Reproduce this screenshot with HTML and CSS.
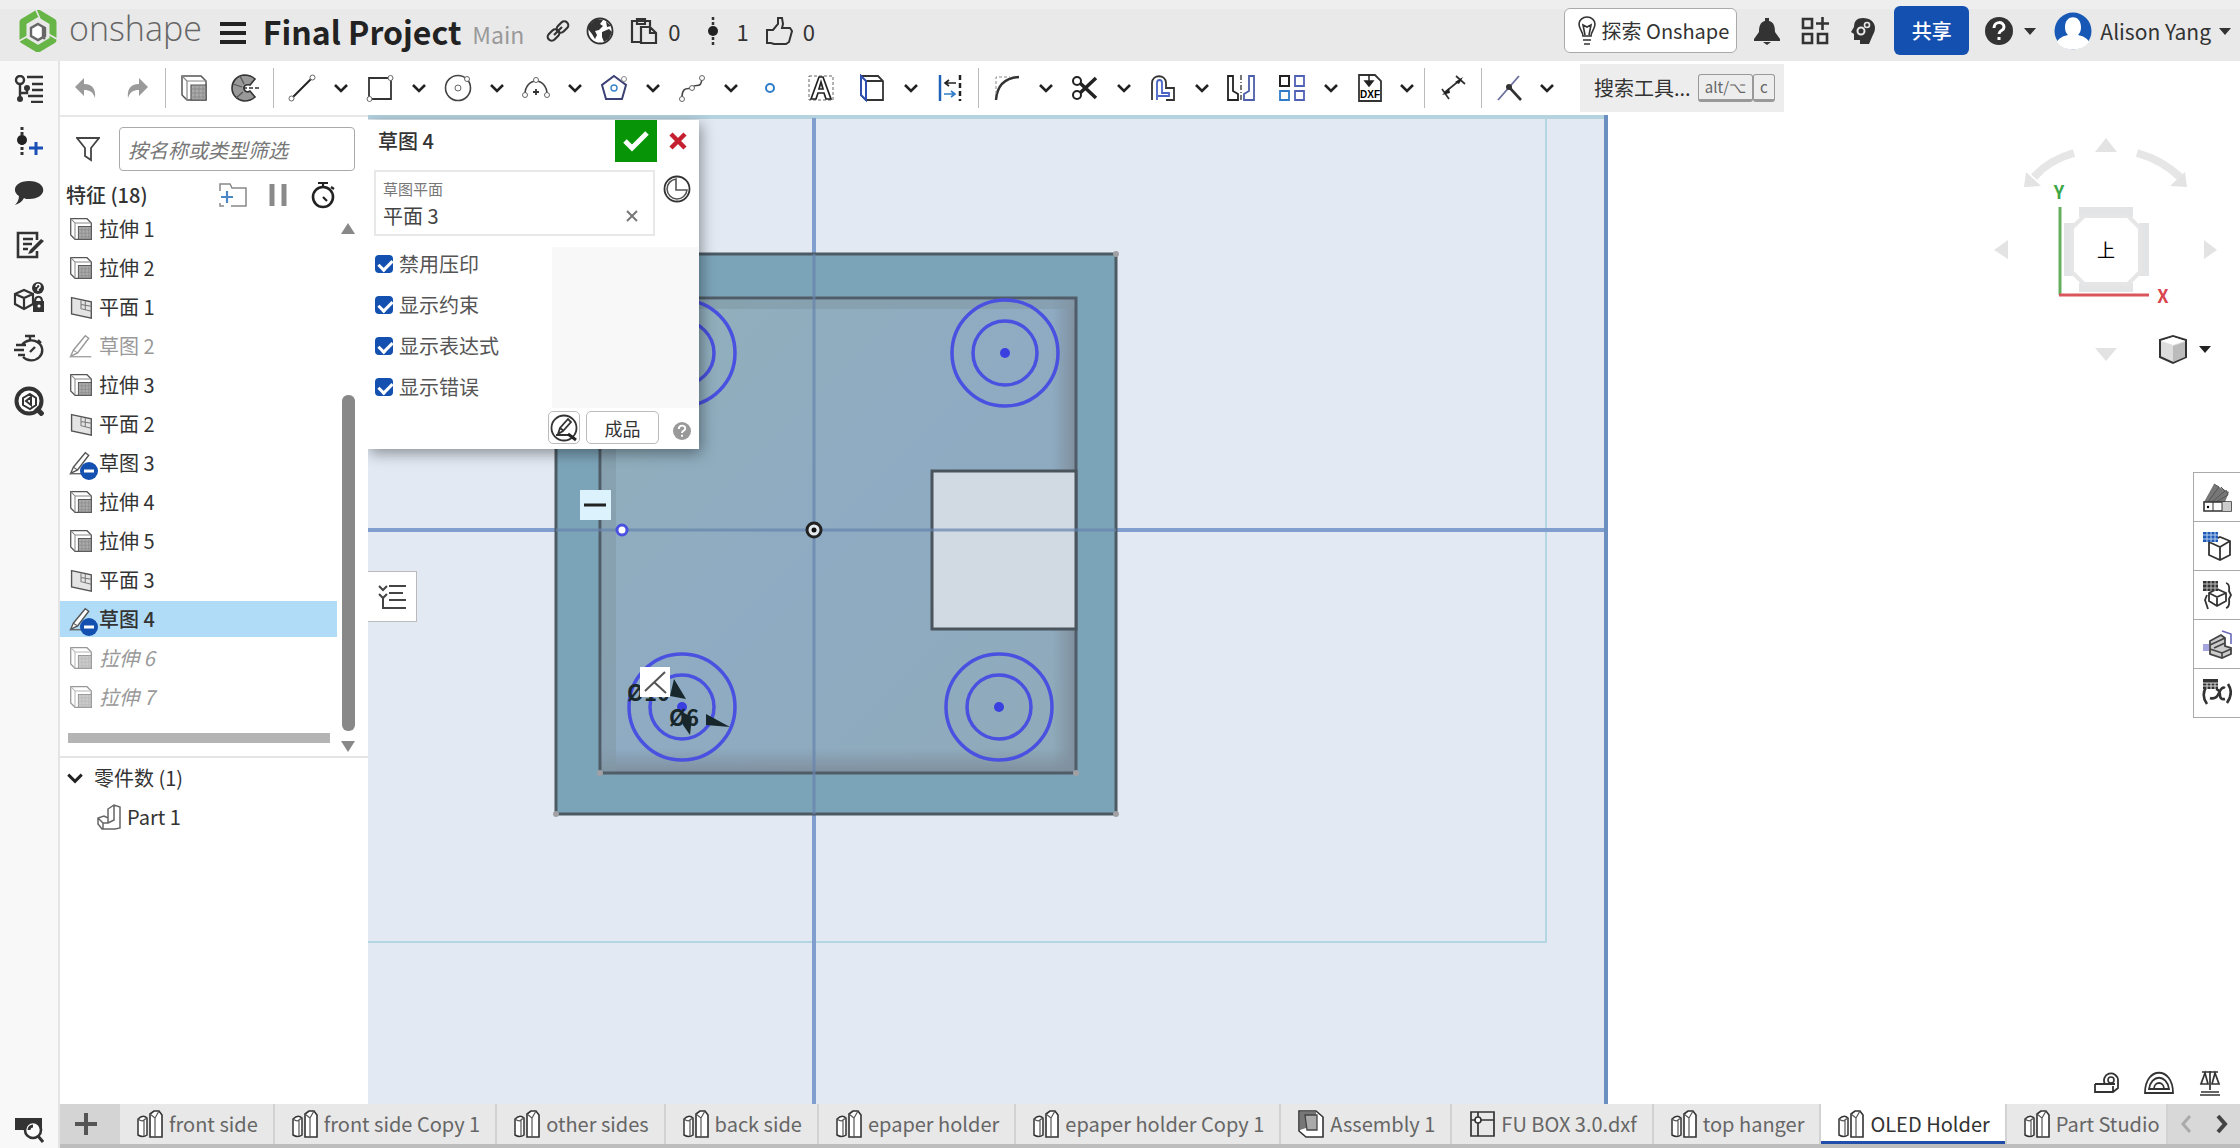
FILE: index.html
```
<!DOCTYPE html>
<html lang="zh-CN">
<head>
    <meta charset="UTF-8">
    <meta name="viewport" content="width=device-width, initial-scale=1.0">
    <title>Final Project | OLED Holder</title>
    <link rel="stylesheet" href="styles.css">
</head>
<body>
    <!-- Shared icons -->
    <svg class="sprite" aria-hidden="true">
        <symbol id="chevron" viewBox="0 0 16 10"><path d="M2 2l6 6 6-6" fill="none" stroke="#222" stroke-width="2.6"/></symbol>
        <symbol id="caret" viewBox="0 0 12 8"><path d="M0 1h12L6 8z" fill="#333"/></symbol>
        <symbol id="extrude" viewBox="0 0 28 28">
            <path d="M2 2h19l5 5v19H7l-5-5z" fill="#fff" stroke="#555" stroke-width="1.5"/>
            <path d="M2 2l5 5v19M7 7h19" fill="none" stroke="#888" stroke-width="1.2"/>
            <path d="M11 11h15v15H11z" fill="#aaa" stroke="#555" stroke-width="1.2"/>
            <path d="M11 15h15M11 19h15M11 23h15M15 11v15M19 11v15M23 11v15" stroke="#888" stroke-width=".8"/>
        </symbol>
        <symbol id="plane" viewBox="0 0 28 28">
            <path d="M3 3l23 5v19L3 22z" fill="#e4e4e4" stroke="#555" stroke-width="1.6"/>
            <path d="M14 6v10l12 3M19 7v10M14 11l12 2" fill="none" stroke="#777" stroke-width="1.2"/>
        </symbol>
        <symbol id="sketch" viewBox="0 0 28 28">
            <path d="M5 19L19 2l4 3L10 22l-8 4z" fill="#fff" stroke="#555" stroke-width="1.6"/>
            <path d="M1 26.500h25" stroke="#666" stroke-width="1.6"/>
            <path d="M5 19l5 3" stroke="#555" stroke-width="1.2"/>
        </symbol>
        <symbol id="badge-minus" viewBox="0 0 18 18"><circle cx="9" cy="9" r="9" fill="#1450b0"/><path d="M4 9h10" stroke="#fff" stroke-width="3"/></symbol>
        <symbol id="partstudio" viewBox="0 0 26 28">
            <path d="M1 9q5-5 9-1v17q-4 3-9 0z" fill="#fff" stroke="#333" stroke-width="1.500"/>
            <path d="M1 9q4 3 6 1v16M7 10l3-2" fill="none" stroke="#555" stroke-width="1.200"/>
            <path d="M13 4l4-3h5l3 4v22H13z" fill="#fff" stroke="#333" stroke-width="1.600"/>
            <path d="M13 4l5 4v19M18 8l4-7" fill="none" stroke="#555" stroke-width="1.200"/>
        </symbol>
        <symbol id="assembly" viewBox="0 0 26 28">
            <path d="M1 1h17l7 6v20H8l-7-6z" fill="#fff" stroke="#333" stroke-width="1.6"/>
            <path d="M2 2h16v16H8l-6 2z" fill="#777"/><path d="M7 5h12v15H9z" fill="#aaa" stroke="#444" stroke-width="1.3"/>
        </symbol>
        <symbol id="drawing" viewBox="0 0 26 28">
            <path d="M2 2h23v24H2zM2 10h23M9 2v5M9 13v13" fill="none" stroke="#333" stroke-width="1.7"/><circle cx="9" cy="10" r="3" fill="#fff" stroke="#333" stroke-width="1.6"/>
        </symbol>
        <symbol id="timer" viewBox="0 0 28 28">
            <circle cx="14" cy="16" r="10" fill="none" stroke="#222" stroke-width="2.6"/><path d="M9 2h10M14 2v4M22 6l3 2M14 16l4 4" stroke="#222" stroke-width="2.2"/>
        </symbol>
    </svg>

    <header class="topbar">
        <a class="logo" href="#" aria-label="onshape">
            <svg width="38" height="42" viewBox="0 0 38 42">
                <path d="M19 3l15 9v18l-15 9-15-9V12z" fill="none" stroke="#68b547" stroke-width="7" stroke-linejoin="round"/>
                <path d="M17 0l4 9M0 31l9-5M38 29l-9-5" stroke="#e9e9e9" stroke-width="1.600"/>
                <path d="M19 14l7 4v8l-7 4-7-4v-8z" fill="#fff" stroke="#666" stroke-width="2.400"/>
                <path d="M24 17v10l2 2" fill="none" stroke="#666" stroke-width="2.400"/>
            </svg>
            <span>onshape</span>
        </a>
        <button class="menu" aria-label="菜单"><svg width="26" height="24"><path d="M0 3h26M0 12h26M0 21h26" stroke="#222" stroke-width="4"/></svg></button>
        <h1>Final Project</h1>
        <span class="branch">Main</span>
        <div class="doc-actions">
            <button aria-label="链接"><svg width="24" height="28" viewBox="0 0 24 28"><g fill="none" stroke="#333" stroke-width="2.200"><rect x="1" y="14" width="13" height="8" rx="4" transform="rotate(-45 7.500 18)"/><rect x="10" y="6" width="13" height="8" rx="4" transform="rotate(-45 16.500 10)"/><path d="M8 18l8-8"/></g></svg></button>
            <button aria-label="公开"><svg width="28" height="28" viewBox="0 0 28 28"><circle cx="14" cy="14" r="12.500" fill="#fff" stroke="#333" stroke-width="1.800"/><path d="M3 8l7-6 7 1-3 4 3 2-4 4-4 1 2 4-2 4-3-5-4-5zM16 15l7-3 3 3-3 7-5 3-2-5zM20 4l5 5-4 1z" fill="#333"/></svg></button>
            <button aria-label="副本"><svg width="28" height="28" viewBox="0 0 28 28"><path d="M10 25H2V4h18v5M7 2h8v5H7zM11 10h9l6 6v10H11zM20 10v6h6" fill="none" stroke="#333" stroke-width="2.200"/></svg><span>0</span></button>
            <button class="versions" aria-label="版本"><svg width="12" height="28" viewBox="0 0 12 28"><path d="M6 0v28" stroke="#333" stroke-width="2.500" stroke-dasharray="3 2"/><circle cx="6" cy="14" r="5" fill="#222"/></svg><span>1</span></button>
            <button class="likes" aria-label="赞"><svg width="28" height="28" viewBox="0 0 28 28"><path d="M2 13h6l5-6V1h4l1 6-1 4h8l2 3-3 11-3 2H9l-3-1H2z" fill="none" stroke="#333" stroke-width="2"/></svg><span>0</span></button>
        </div>
        <div class="account">
            <button class="explore"><svg width="18" height="30" viewBox="0 0 18 30"><path d="M5 20C5 16 1 13 1 8a8 7 0 0 1 16 0c0 5-4 8-4 12zM5 24h8M6 28h6M7 19L5 9l4 2 4-2-2 10" fill="none" stroke="#333" stroke-width="1.600"/></svg><span>探索 Onshape</span></button>
            <button aria-label="通知"><svg width="28" height="28" viewBox="0 0 28 28"><path d="M12 1h4v3c5 1 6 6 6 11l5 7v2H1v-2l5-7c0-5 1-10 6-11zM10 25h8l-4 3z" fill="#333"/></svg></button>
            <button aria-label="应用"><svg width="28" height="28" viewBox="0 0 28 28"><path d="M2 2h9v9H2zM2 17h9v9H2zM17 17h9v9h-9zM21.500 0v13M15 6.500h13" fill="none" stroke="#333" stroke-width="2.600"/></svg></button>
            <button aria-label="AI"><svg width="28" height="28" viewBox="0 0 28 28"><path d="M14 1c7 0 12 4 12 10 0 4-2 6-3 9l-3 7h-9v-4H5v-6l-3-2 3-5C5 4 8 1 14 1z" fill="#333"/><circle cx="12" cy="14" r="3.500" fill="none" stroke="#e9e9e9" stroke-width="2"/><circle cx="18" cy="8" r="2.500" fill="none" stroke="#e9e9e9" stroke-width="1.600"/></svg></button>
            <button class="share">共享</button>
            <button class="help" aria-label="帮助"><svg width="28" height="28" viewBox="0 0 28 28"><circle cx="14" cy="14" r="14" fill="#333"/><path d="M9 11c0-7 10-7 10-1 0 4-5 3-5 7M14 20v3" fill="none" stroke="#fff" stroke-width="3"/></svg><svg width="12" height="8"><use href="#caret"/></svg></button>
            <button class="user"><svg width="38" height="38" viewBox="0 0 38 38"><circle cx="19" cy="19" r="18.500" fill="#1757b5"/><path d="M11 15c0-13 16-13 16 0 0 5-2 7-3 8 5 1 9 3 11 7-7 10-25 10-32 0 2-4 6-6 11-7-1-1-3-3-3-8z" fill="#fff"/></svg><span>Alison Yang</span><svg width="12" height="8"><use href="#caret"/></svg></button>
        </div>
    </header>

    <div class="app">
        <nav class="rail">
            <button aria-label="特征列表"><svg width="30" height="28" viewBox="0 0 30 28"><g fill="none" stroke="#333" stroke-width="2.400"><circle cx="6" cy="5" r="4"/><path d="M6 9v15M6 18h7v-5M13 2h16M18 9h11M18 15h11M14 21h15M17 27h12"/></g><circle cx="6" cy="24" r="3" fill="#333"/><circle cx="13" cy="13" r="3" fill="#333"/></svg></button>
            <button aria-label="新建版本"><svg width="30" height="30" viewBox="0 0 30 30"><path d="M8 1v28" stroke="#333" stroke-width="3" stroke-dasharray="3 2"/><circle cx="8" cy="14" r="5" fill="#222"/><path d="M22 16v13M15 22h14" stroke="#1a4fb5" stroke-width="3"/></svg></button>
            <button aria-label="评论"><svg width="30" height="28" viewBox="0 0 30 28"><path d="M15 2c19 0 19 18 0 18-2 0-4 0-5-1-2 4-6 6-9 7 2-2 4-5 4-9C-3 12 1 2 15 2z" fill="#333"/></svg></button>
            <button aria-label="备注"><svg width="30" height="30" viewBox="0 0 30 30"><path d="M23 10V3H4v24h19v-6M9 9h10M9 14h9M9 19h5" fill="none" stroke="#333" stroke-width="2.600"/><path d="M27 9l3 2-12 12-4 1 2-4z" fill="#333"/></svg></button>
            <button aria-label="属性"><svg width="32" height="32" viewBox="0 0 32 32"><path d="M2 13l9-4 9 4v10l-9 5-9-5zM2 13l9 4 9-4M11 17v11" fill="none" stroke="#333" stroke-width="2.200"/><circle cx="25" cy="7" r="6" fill="#333"/><path d="M23 6c0-4 5-3 4 0l-2 2v2" fill="none" stroke="#fff" stroke-width="1.500"/><path d="M20 20h11v11H20z" fill="#333"/><path d="M22 21c0-7 7-7 7 0" fill="none" stroke="#333" stroke-width="2.200"/><circle cx="26" cy="25" r="1.600" fill="#fff"/></svg></button>
            <button aria-label="性能"><svg width="30" height="30" viewBox="0 0 30 30"><path d="M8 11a11 10 0 1 1 1 12M11 2h10M16 2v5M24 6l3 3M16 18l5-5M2 11h10M0 16h10M4 21h7" fill="none" stroke="#333" stroke-width="2.400"/></svg></button>
            <button aria-label="查找零件"><svg width="30" height="30" viewBox="0 0 30 30"><circle cx="15" cy="15" r="12.500" fill="#fff" stroke="#333" stroke-width="4"/><path d="M22 22l7 7" stroke="#333" stroke-width="5"/><path d="M16 8l6 4v7l-6 4-7-4v-7zM17 11l-5 4 5 4z" fill="none" stroke="#333" stroke-width="2"/></svg></button>
            <button class="rail-end" aria-label="搜索"><svg width="30" height="26" viewBox="0 0 30 26"><path d="M1 1h27v12H1z" fill="#333"/><circle cx="19" cy="13" r="8" fill="#fff" stroke="#333" stroke-width="2.600"/><path d="M15 13a4 4 0 0 1 4-4M24 19l5 6" fill="none" stroke="#333" stroke-width="3"/></svg></button>
        </nav>

        <div class="workspace">
            <div class="toolbar">
                <button class="tool" aria-label="撤销"><svg viewBox="0 0 28 28"><path d="M12 4v6c9 0 12 6 11 14-2-6-5-8-11-8v6L3 13z" fill="#9a9a9a"/></svg></button>
                <button class="tool spaced" aria-label="重做"><svg viewBox="0 0 28 28"><path d="M16 4v6C7 10 4 16 5 24c2-6 5-8 11-8v6l9-9z" fill="#9a9a9a"/></svg></button>
                <span class="divider"></span>
                <button class="tool" aria-label="拉伸"><svg><use href="#extrude"/></svg></button>
                <button class="tool spaced" aria-label="旋转"><svg viewBox="0 0 28 28"><path d="M24 5C21 2 17 1 13 1 5 2 1 8 1 14c0 7 5 12 12 13 4 0 8-1 11-4l-5-6c-6 4-10-8 0-6z" fill="#999" stroke="#333" stroke-width="1.600"/><path d="M12 14h16" stroke="#333" stroke-width="1.500" stroke-dasharray="4 2"/><path d="M9 2l4 8M2 10l9 3M5 24l7-6" stroke="#555" stroke-width="1.300"/></svg></button>
                <span class="divider"></span>
                <button class="tool" aria-label="直线"><svg viewBox="0 0 28 28"><path d="M4 24L24 4" stroke="#222" stroke-width="2"/><circle cx="3.500" cy="24.500" r="2.500" fill="#fff" stroke="#666"/><circle cx="24.500" cy="3.500" r="2.500" fill="#fff" stroke="#666"/></svg></button>
                <button class="more" aria-label="更多直线"><svg><use href="#chevron"/></svg></button>
                <button class="tool" aria-label="矩形"><svg viewBox="0 0 28 28"><path d="M3 4h22v21H3z" fill="none" stroke="#333" stroke-width="1.800"/><circle cx="3.500" cy="25" r="2.500" fill="#fff" stroke="#666"/><circle cx="24.500" cy="4" r="2.500" fill="#fff" stroke="#666"/></svg></button>
                <button class="more" aria-label="更多矩形"><svg><use href="#chevron"/></svg></button>
                <button class="tool" aria-label="圆"><svg viewBox="0 0 28 28"><circle cx="14" cy="14" r="12.500" fill="none" stroke="#444" stroke-width="1.600"/><circle cx="14" cy="14" r="3" fill="none" stroke="#666"/><circle cx="23" cy="5" r="2.500" fill="#fff" stroke="#666"/></svg></button>
                <button class="more" aria-label="更多圆"><svg><use href="#chevron"/></svg></button>
                <button class="tool" aria-label="圆弧"><svg viewBox="0 0 28 28"><path d="M3 20a11 13 0 0 1 22 0" fill="none" stroke="#444" stroke-width="1.600"/><path d="M14 15v6M11 18h6" stroke="#333" stroke-width="1.800"/><g fill="#fff" stroke="#666"><circle cx="3" cy="21" r="2.500"/><circle cx="25" cy="21" r="2.500"/><circle cx="14" cy="6" r="2.500"/></g></svg></button>
                <button class="more" aria-label="更多圆弧"><svg><use href="#chevron"/></svg></button>
                <button class="tool" aria-label="多边形"><svg viewBox="0 0 28 28"><path d="M14 2l12 9-4 14H6L2 11z" fill="none" stroke="#3b4075" stroke-width="2"/><circle cx="14" cy="14" r="3" fill="#fff" stroke="#3a85cc" stroke-width="1.400"/><circle cx="24" cy="5" r="2.500" fill="#fff" stroke="#888"/></svg></button>
                <button class="more" aria-label="更多多边形"><svg><use href="#chevron"/></svg></button>
                <button class="tool" aria-label="样条"><svg viewBox="0 0 28 28"><path d="M4 24c0-14 8-7 11-11s8 3 9-9" fill="none" stroke="#444" stroke-width="1.600"/><g fill="#fff" stroke="#666"><circle cx="4" cy="25" r="2.500"/><circle cx="14" cy="14" r="2.500"/><circle cx="24" cy="4" r="2.500"/></g></svg></button>
                <button class="more" aria-label="更多样条"><svg><use href="#chevron"/></svg></button>
                <button class="tool" aria-label="点"><svg viewBox="0 0 28 28"><circle cx="14" cy="14" r="4" fill="#fff" stroke="#2f7cc8" stroke-width="2"/></svg></button>
                <button class="tool spaced" aria-label="文本"><svg viewBox="0 0 28 28"><path d="M2 2h24v24H2z" fill="none" stroke="#666" stroke-dasharray="3 2"/><path d="M4 25L12 3h4l8 22h-5l-2-6h-6l-2 6zM12 15h4l-2-7z" fill="#fff" stroke="#222" stroke-width="1.700"/></svg></button>
                <button class="tool spaced" aria-label="使用"><svg viewBox="0 0 28 28"><path d="M3 2h17l5 5v19H8l-5-5zM8 7h17" fill="none" stroke="#333" stroke-width="1.800"/><path d="M3 2l5 5v19l-5-5z" fill="#fff" stroke="#2f4fb0" stroke-width="2"/></svg></button>
                <button class="more" aria-label="更多使用"><svg><use href="#chevron"/></svg></button>
                <button class="tool" aria-label="构造"><svg viewBox="0 0 28 28"><path d="M4 1v26" stroke="#1f63b8" stroke-width="2.500"/><path d="M24 1v26" stroke="#222" stroke-width="2.500" stroke-dasharray="5 3"/><path d="M20 9h-10M13 6l-4 3 4 3" fill="none" stroke="#222" stroke-width="1.600"/><path d="M8 20h10M15 17l4 3-4 3" fill="none" stroke="#2f7cc8" stroke-width="1.600"/></svg></button>
                <span class="divider"></span>
                <button class="tool" aria-label="圆角"><svg viewBox="0 0 28 28"><path d="M3 26C4 12 11 4 26 3" fill="none" stroke="#333" stroke-width="2.400"/><path d="M3 20V3h14" fill="none" stroke="#888" stroke-dasharray="3 2"/></svg></button>
                <button class="more" aria-label="更多圆角"><svg><use href="#chevron"/></svg></button>
                <button class="tool" aria-label="修剪"><svg viewBox="0 0 28 28"><path d="M9 9l16 15M9 19L25 4" stroke="#222" stroke-width="3.500"/><circle cx="6" cy="7" r="4" fill="none" stroke="#222" stroke-width="2"/><circle cx="6" cy="21" r="4" fill="none" stroke="#222" stroke-width="2"/></svg></button>
                <button class="more" aria-label="更多修剪"><svg><use href="#chevron"/></svg></button>
                <button class="tool" aria-label="偏移"><svg viewBox="0 0 28 28"><path d="M3 26V9C3 0 17 0 17 9v5h8v12h-8" fill="none" stroke="#333" stroke-width="1.800"/><path d="M8 26V9c0-4 5-4 5 0v10h7v3H9" fill="none" stroke="#4963c4" stroke-width="1.800"/></svg></button>
                <button class="more" aria-label="更多偏移"><svg><use href="#chevron"/></svg></button>
                <button class="tool" aria-label="镜像"><svg viewBox="0 0 28 28"><path d="M1 2h5v15l5 3v6H1z" fill="none" stroke="#222" stroke-width="1.800"/><path d="M14 1v26" stroke="#555" stroke-width="1.600" stroke-dasharray="5 2 1 2"/><path d="M27 2h-5v15l-5 3v6h10z" fill="none" stroke="#4d5fa8" stroke-width="1.800"/></svg></button>
                <button class="tool spaced" aria-label="阵列"><svg viewBox="0 0 28 28"><path d="M2 2h9v10H2z" fill="none" stroke="#222" stroke-width="2"/><path d="M17 2h9v10h-9zM17 17h9v9h-9z" fill="none" stroke="#5060b5" stroke-width="1.800"/><path d="M2 17h9v9H2z" fill="none" stroke="#2f7cc8" stroke-width="1.800"/></svg></button>
                <button class="more" aria-label="更多阵列"><svg><use href="#chevron"/></svg></button>
                <button class="tool" aria-label="插入 DXF"><svg viewBox="0 0 28 28"><path d="M3 1h16l6 6v20H3z" fill="none" stroke="#333" stroke-width="1.800"/><path d="M13 1v8M9 7l4 5 4-5z" fill="#222" stroke="#222" stroke-width="1.500"/><text x="14" y="24" class="dxf">DXF</text></svg></button>
                <button class="more narrow" aria-label="更多插入"><svg><use href="#chevron"/></svg></button>
                <span class="divider tight"></span>
                <button class="tool" aria-label="尺寸"><svg viewBox="0 0 28 28"><path d="M5 19L21 6M17 2l9 8M3 15l7 10" fill="none" stroke="#333" stroke-width="1.700"/><path d="M3 21l7-7 1 5zM24 3l-8 5 4 2z" fill="#222"/></svg></button>
                <span class="divider"></span>
                <button class="tool" aria-label="约束"><svg viewBox="0 0 28 28"><path d="M13 13l12 13" stroke="#333" stroke-width="2.600"/><path d="M2 26L23 2" stroke="#6a6f9c" stroke-width="1.800"/><circle cx="13" cy="13" r="3" fill="#333"/></svg></button>
                <button class="more narrow" aria-label="更多约束"><svg><use href="#chevron"/></svg></button>
                <button class="tool-search">搜索工具... <kbd>alt/⌥</kbd><kbd>c</kbd></button>
            </div>

            <div class="stage">
                <aside class="panel">
                    <div class="filter">
                        <svg width="24" height="26" viewBox="0 0 24 26"><path d="M1 2h22l-8 10v12l-6-4v-8z" fill="none" stroke="#444" stroke-width="1.800"/></svg>
                        <input type="text" placeholder="按名称或类型筛选" aria-label="按名称或类型筛选">
                    </div>
                    <div class="panel-head">
                        <h2>特征 (18)</h2>
                        <button aria-label="新建文件夹"><svg width="28" height="24" viewBox="0 0 28 24"><path d="M1 8V1h10l2 4h14v18H12M1 20v3h4" fill="none" stroke="#888" stroke-width="1.500"/><path d="M8 8v12M2 14h12" stroke="#4b86c6" stroke-width="2.200"/></svg></button>
                        <button aria-label="暂停"><svg width="20" height="22"><path d="M4 0v22M16 0v22" stroke="#8a8a8a" stroke-width="5"/></svg></button>
                        <button aria-label="重建时间"><svg width="28" height="28"><use href="#timer"/></svg></button>
                    </div>
                    <div class="features">
                        <ul>
                            <li><svg><use href="#extrude"/></svg>拉伸 1</li>
                            <li><svg><use href="#extrude"/></svg>拉伸 2</li>
                            <li><svg><use href="#plane"/></svg>平面 1</li>
                            <li class="hidden-item"><svg><use href="#sketch"/></svg>草图 2</li>
                            <li><svg><use href="#extrude"/></svg>拉伸 3</li>
                            <li><svg><use href="#plane"/></svg>平面 2</li>
                            <li><svg><use href="#sketch"/></svg><svg class="badge"><use href="#badge-minus"/></svg>草图 3</li>
                            <li><svg><use href="#extrude"/></svg>拉伸 4</li>
                            <li><svg><use href="#extrude"/></svg>拉伸 5</li>
                            <li><svg><use href="#plane"/></svg>平面 3</li>
                            <li class="selected"><svg><use href="#sketch"/></svg><svg class="badge"><use href="#badge-minus"/></svg>草图 4</li>
                            <li class="hidden-item rolled"><svg><use href="#extrude"/></svg>拉伸 6</li>
                            <li class="hidden-item rolled"><svg><use href="#extrude"/></svg>拉伸 7</li>
                        </ul>
                        <div class="scrollbar"><span class="arrow-up"></span><span class="thumb"></span><span class="arrow-down"></span></div>
                        <div class="rollback"></div>
                    </div>
                    <div class="parts">
                        <h2><svg width="18" height="12"><use href="#chevron"/></svg>零件数 (1)</h2>
                        <div class="part"><svg width="24" height="26" viewBox="0 0 24 26"><path d="M11 5l6-4 6 2v21l-5 1H5l-4-5v-6l6-2 4 2zM11 14v5H6M1 14l5 5v6M17 1v15l-6 3" fill="#fff" stroke="#666" stroke-width="1.500"/></svg>Part 1</div>
                    </div>
                </aside>

                <main class="canvas">
                    <svg class="model" viewBox="368 115 1872 989" preserveAspectRatio="xMinYMin slice">
                        <defs>
                            <linearGradient id="face" x1="0" y1="0" x2="1" y2="1"><stop offset="0" stop-color="#91afb9"/><stop offset=".5" stop-color="#8eabc3"/><stop offset="1" stop-color="#8faab9"/></linearGradient>
                            <linearGradient id="shade-b" x1="0" y1="0" x2="0" y2="1"><stop offset="0" stop-color="#7f8f9e" stop-opacity="0"/><stop offset="1" stop-color="#7f8f9e"/></linearGradient>
                            <linearGradient id="shade-r"><stop offset="0" stop-color="#7f8f9e" stop-opacity="0"/><stop offset="1" stop-color="#7f8f9e"/></linearGradient>
                        </defs>
                        <!-- sketch plane and guides -->
                        <path d="M368 115h1238v989H368z" fill="#e2e9f3"/>
                        <path d="M368 117h1238" stroke="#b4d3df" stroke-width="4"/>
                        <path d="M1546 118v824H368" fill="none" stroke="#b3d6e2" stroke-width="2"/>
                        <path d="M368 530h1238M814 118v986" stroke="#809fce" stroke-width="4"/>
                        <path d="M1606 115v989" stroke="#6b90c0" stroke-width="4"/>
                        <!-- body -->
                        <path d="M556 254h560v560H556z" fill="#7ca4b8" stroke="#4c5a64" stroke-width="3"/>
                        <path d="M600 298h476v475H600z" fill="url(#face)"/>
                        <path d="M600 748h476v25H600z" fill="url(#shade-b)"/>
                        <path d="M1052 298h24v475h-24z" fill="url(#shade-r)"/>
                        <path d="M602 298h14v475h-14zM600 300h476v9H600z" fill="#829aa6" opacity=".6"/>
                        <path d="M600 298h476v475H600z" fill="none" stroke="#505d68" stroke-width="3"/>
                        <path d="M932 471h144v158H932z" fill="#d1d9e3" stroke="#4a545c" stroke-width="3"/>
                        <path d="M556 530h560M814 254v560" stroke="#6684ad" stroke-width="3" opacity=".7"/>
                        <g fill="#a1a1a5"><circle cx="556" cy="814" r="3"/><circle cx="1116" cy="814" r="3"/><circle cx="1116" cy="254" r="3"/><circle cx="600" cy="773" r="3"/><circle cx="1076" cy="773" r="3"/></g>
                        <!-- holes -->
                        <g fill="none" stroke="#4a50e0" stroke-width="3.500">
                            <circle cx="682" cy="353" r="53"/><circle cx="682" cy="353" r="32"/>
                            <circle cx="1005" cy="353" r="53"/><circle cx="1005" cy="353" r="32"/>
                            <circle cx="682" cy="707" r="53"/><circle cx="682" cy="707" r="32"/>
                            <circle cx="999" cy="707" r="53"/><circle cx="999" cy="707" r="32"/>
                        </g>
                        <g fill="#3a3fe0"><circle cx="1005" cy="353" r="5"/><circle cx="999" cy="707" r="5"/><circle cx="682" cy="707" r="5"/></g>
                        <!-- dimensions and constraints -->
                        <g fill="#17272b">
                            <text x="627" y="701" class="dim">Ø10</text>
                            <text x="669" y="726" class="dim">Ø6</text>
                            <path d="M674 679l12 20-16-3zM706 714l24 13-24-2zM682 712l10 5-2 18-7-10z"/>
                        </g>
                        <circle cx="622" cy="530" r="5" fill="#fff" stroke="#4a50e0" stroke-width="3"/>
                        <circle cx="814" cy="530" r="7" fill="#e5eaee" stroke="#222" stroke-width="3"/><circle cx="814" cy="530" r="2.500" fill="#111"/>
                        <path d="M580 490h31v30h-31z" fill="#dcf2fc"/><path d="M584 505h22" stroke="#222" stroke-width="3"/>
                        <path d="M640 667h30v30h-30z" fill="#fff"/><path d="M645 691l20-19M654 682l12 11" stroke="#555" stroke-width="2"/>
                    </svg>

                    <section class="dialog">
                        <div class="dialog-head">
                            <h3>草图 4</h3>
                            <button class="accept" aria-label="确定"><svg width="26" height="22" viewBox="0 0 26 22"><path d="M2 11l7 7L24 3" fill="none" stroke="#fff" stroke-width="5"/></svg></button>
                            <button class="cancel" aria-label="取消"><svg width="18" height="18" viewBox="0 0 18 18"><path d="M2 2l14 14M16 2L2 16" stroke="#c4202f" stroke-width="4.500"/></svg></button>
                        </div>
                        <div class="plane-row">
                            <div class="plane-box">
                                <span class="plane-label">草图平面</span>
                                <div class="plane-value">平面 3<button aria-label="清除"><svg width="14" height="14" viewBox="0 0 14 14"><path d="M2 2l10 10M12 2L2 12" stroke="#777" stroke-width="2"/></svg></button></div>
                            </div>
                            <button class="clock" aria-label="历史"><svg width="28" height="28" viewBox="0 0 28 28"><circle cx="14" cy="14" r="12.500" fill="#fff" stroke="#333" stroke-width="1.800"/><path d="M13 4a10 10 0 1 0 11 11H13z" fill="none" stroke="#555" stroke-width="1.600"/></svg></button>
                        </div>
                        <div class="options">
                            <div class="checks">
                                <label><input type="checkbox" checked>禁用压印</label>
                                <label><input type="checkbox" checked>显示约束</label>
                                <label><input type="checkbox" checked>显示表达式</label>
                                <label><input type="checkbox" checked>显示错误</label>
                            </div>
                            <div class="blank"></div>
                        </div>
                        <div class="dialog-foot">
                            <button class="box-btn" aria-label="检查草图"><svg width="28" height="28" viewBox="0 0 28 28"><circle cx="14" cy="14" r="12.500" fill="none" stroke="#333" stroke-width="1.800"/><path d="M8 20l2-6 8-9 3 3-8 9zM10 14l4 3M6 21h13" fill="none" stroke="#333" stroke-width="1.800"/><path d="M18 20l8 6" stroke="#222" stroke-width="3"/></svg></button>
                            <button class="box-btn final">成品</button>
                            <button class="hint" aria-label="帮助"><svg width="18" height="18" viewBox="0 0 28 28"><circle cx="14" cy="14" r="14" fill="#999"/><path d="M9 11c0-7 10-7 10-1 0 4-5 3-5 7M14 20v3" fill="none" stroke="#fff" stroke-width="3"/></svg></button>
                        </div>
                    </section>

                    <button class="list-toggle" aria-label="列表"><svg width="30" height="28" viewBox="0 0 30 28"><path d="M12 3h17M12 10h14M12 17h17M12 25h17M2 3l4 4 4-4M2 11l4 4 4-4M6 15v10h6" fill="none" stroke="#444" stroke-width="2"/></svg></button>

                    <svg class="view-cube" width="240" height="260" viewBox="1980 120 240 260">
                        <path d="M2095 152l11-14 11 14zM2095 348l11 13 11-13zM2008 240l-14 10 14 9zM2204 240l13 10-13 9z" fill="#e3e3e3"/>
                        <path d="M2074 153q-25 7-40 24M2137 153q25 7 43 24" fill="none" stroke="#e6e6e6" stroke-width="8"/>
                        <path d="M2024 187l2-15 15 14zM2187 187l-2-15-15 14z" fill="#e3e3e3"/>
                        <path d="M2079 207h54v10h-54zM2079 283h54v9h-54zM2064 223h10v53h-10zM2139 223h10v53h-10z" fill="#e3e4e6"/>
                        <path d="M2084 216h44l12 12v44l-12 12h-44l-12-12v-44z" fill="#fff" stroke="#e6e6e6" stroke-width="4" stroke-linejoin="round"/>
                        <path d="M2060 295v-88" stroke="#67ae5c" stroke-width="3"/><path d="M2059 295h90" stroke="#d9565d" stroke-width="3"/>
                        <text x="2059" y="199" class="axis axis-y">Y</text><text x="2163" y="303" class="axis axis-x">X</text><text x="2106" y="257" class="face">上</text>
                        <path d="M2160 340l13-4 13 4v17l-13 6-13-6z" fill="#ddd" stroke="#333" stroke-width="2"/><path d="M2161 341l12-4 12 4-12 4z" fill="#fff"/><path d="M2173 346v16l12-5v-15z" fill="#bbb"/>
                        <path d="M2199 346h12l-6 7z" fill="#222"/>
                    </svg>

                    <div class="palette">
                        <button aria-label="外观"><svg viewBox="0 0 30 30"><path d="M2 20L12 2l7 4 8 4-4 10z" fill="#777"/><path d="M12 2l5 3-11 15M19 5l4 4-13 11M24 8l2 5-12 7" fill="none" stroke="#555"/><path d="M2 20h27v9H2z" fill="#fff" stroke="#333" stroke-width="1.600"/><path d="M20 20h9v9h-9z" fill="#ccc"/><path d="M11 20v9M20 20v9" stroke="#333"/><circle cx="6" cy="25" r="1.200"/></svg></button>
                        <button aria-label="配置"><svg viewBox="0 0 30 30"><path d="M7 11l11-5 10 4v14l-10 5-11-5zM7 11l11 5 10-6M18 16v13" fill="#fff" stroke="#333" stroke-width="1.800"/><path d="M1 1h15v10H1z" fill="#1f5ab8"/><path d="M1 4h15M1 8h15M5 1v10M9 1v10M13 1v10" stroke="#b7cdec"/></svg></button>
                        <button aria-label="自定义表"><svg viewBox="0 0 30 30"><path d="M7 13l8-4 9 4v8l-9 5-8-5zM7 13l8 4 9-4M15 17v9M5 15l-2 5 3 9M24 3q4 1 3 8l2 4-2 4q1 8-3 9" fill="none" stroke="#333" stroke-width="1.800"/><path d="M1 1h15v10H1z" fill="#333"/><path d="M1 4h15M1 8h15M5 1v10M9 1v10M13 1v10" stroke="#bbb"/></svg></button>
                        <button aria-label="钣金表"><svg viewBox="0 0 30 30"><path d="M8 12l11-6 4 3v8l6 2v6l-9 4-12-4z" fill="#ccc" stroke="#444" stroke-width="1.800"/><path d="M8 16l15-7M8 20l12 4 9-4M20 24v5M12 19l11-5" fill="none" stroke="#444" stroke-width="1.600"/><path d="M20 2l9 3v10" fill="none" stroke="#6a68ba" stroke-width="1.600"/><path d="M1 15h6v7H1z" fill="#a5a5e0"/></svg></button>
                        <button aria-label="变量表"><svg viewBox="0 0 30 30"><path d="M4 9q-5 9 1 17M26 6q6 9-1 19" fill="none" stroke="#333" stroke-width="2.600"/><path d="M8 20q6 2 9-5t6-5M14 11q4 1 4 6t5 4" fill="none" stroke="#333" stroke-width="2.600"/><path d="M1 1h15v10H1z" fill="#333"/><path d="M1 5h15M1 8h15M5 5v6M9 5v6M13 5v6" stroke="#ddd"/></svg></button>
                    </div>

                    <div class="measure">
                        <button aria-label="测量"><svg width="26" height="22" viewBox="0 0 26 22"><path d="M2 12h10M2 12v8h18l5-4V8a7 7 0 1 0-13 4h10M20 20v-6" fill="none" stroke="#333" stroke-width="1.800"/><circle cx="18" cy="8" r="3" fill="none" stroke="#333" stroke-width="1.600"/></svg></button>
                        <button aria-label="角度"><svg width="30" height="24" viewBox="0 0 30 24"><path d="M1 22C1-5 29-5 29 22zM5 18C7 3 23 3 25 18zM10 18c0-8 10-8 10 0" fill="none" stroke="#333" stroke-width="1.800"/></svg></button>
                        <button aria-label="质量"><svg width="22" height="26" viewBox="0 0 22 26"><path d="M3 2h16M11 1v19M2 22h18M1 25h20M6 3L2 14h7zM16 3l-3 11h7z" fill="none" stroke="#333" stroke-width="1.700"/></svg></button>
                    </div>
                </main>
            </div>

            <footer class="tabs">
                <button class="add" aria-label="新建"><svg width="24" height="24"><path d="M12 1v22M1 12h22" stroke="#555" stroke-width="4"/></svg></button>
                <a class="tab" href="#"><svg><use href="#partstudio"/></svg>front side</a>
                <a class="tab" href="#"><svg><use href="#partstudio"/></svg>front side Copy 1</a>
                <a class="tab" href="#"><svg><use href="#partstudio"/></svg>other sides</a>
                <a class="tab" href="#"><svg><use href="#partstudio"/></svg>back side</a>
                <a class="tab" href="#"><svg><use href="#partstudio"/></svg>epaper holder</a>
                <a class="tab" href="#"><svg><use href="#partstudio"/></svg>epaper holder Copy 1</a>
                <a class="tab" href="#"><svg><use href="#assembly"/></svg>Assembly 1</a>
                <a class="tab" href="#"><svg><use href="#drawing"/></svg>FU BOX 3.0.dxf</a>
                <a class="tab" href="#"><svg><use href="#partstudio"/></svg>top hanger</a>
                <a class="tab active" href="#"><svg><use href="#partstudio"/></svg>OLED Holder</a>
                <a class="tab last" href="#"><svg><use href="#partstudio"/></svg>Part Studio</a>
                <div class="tab-nav">
                    <button aria-label="上一页"><svg width="12" height="20"><path d="M10 2L3 10l7 8" fill="none" stroke="#aaa" stroke-width="3"/></svg></button>
                    <button aria-label="下一页"><svg width="12" height="20"><path d="M2 2l7 8-7 8" fill="none" stroke="#444" stroke-width="4"/></svg></button>
                </div>
            </footer>
        </div>
    </div>
</body>
</html>
```
FILE: styles.css
```
* {
    margin: 0;
    padding: 0;
    box-sizing: border-box;
}

body {
    display: flex;
    flex-direction: column;
    height: 100vh;
    overflow: hidden;
    font-family: "Noto Sans CJK SC", "Noto Sans", sans-serif;
    font-size: 20px;
    line-height: 28px;
    color: #333;
    background: #fff;
}

button {
    display: flex;
    align-items: center;
    justify-content: center;
    border: none;
    background: none;
    font: inherit;
    color: inherit;
    cursor: pointer;
}

svg {
    flex: none;
}

.sprite {
    position: absolute;
    width: 0;
    height: 0;
}

/* Header */
.topbar {
    flex: none;
    display: flex;
    align-items: center;
    height: 61px;
    padding: 0 9px 0 19px;
    background: linear-gradient(#eee 9px, #e9e9e9 9px);
}

.logo {
    display: flex;
    align-items: center;
    gap: 12px;
    color: #666;
    text-decoration: none;
    font-family: "Open Sans", sans-serif;
    font-size: 34px;
    font-weight: 300;
}

.logo span {
    margin-top: -6px;
}

.menu {
    margin: 4px 17px 0 18px;
}

.topbar h1 {
    font-family: "Noto Sans CJK SC", sans-serif;
    font-size: 32px;
    font-weight: 700;
    color: #222;
}

.branch {
    margin: 6px 22px 0 11px;
    font-size: 23px;
    color: #999;
}

.doc-actions {
    display: flex;
    align-items: center;
    gap: 16px;
}

.doc-actions button {
    gap: 10px;
    font-size: 22px;
}

.doc-actions .versions {
    gap: 18px;
    margin-left: 10px;
}

.account {
    display: flex;
    align-items: center;
    gap: 20px;
    margin-left: auto;
}

.explore {
    gap: 6px;
    height: 45px;
    padding: 0 7px 0 13px;
    margin-right: -4px;
    white-space: nowrap;
    background: #fff;
    border: 1px solid #aaa;
    border-radius: 6px;
}

.account .share {
    width: 75px;
    height: 49px;
    margin: 0 -4px 0 -3px;
    background: #1450b0;
    border-radius: 6px;
    color: #fff;
    font-weight: 500;
}

.help {
    gap: 11px;
}

.user {
    gap: 8px;
    white-space: nowrap;
    font-size: 21px;
}

.account .user {
    margin-left: -2px;
}

/* Left rail */
.app {
    flex: 1;
    display: flex;
    min-height: 0;
}

.rail {
    flex: none;
    display: flex;
    flex-direction: column;
    width: 60px;
    padding: 2px 0;
    background: #f8f8f8;
    border-right: 2px solid #e4e4e4;
}

.rail button {
    height: 52px;
}

.rail .rail-end {
    height: 32px;
    margin-top: auto;
}

.workspace {
    flex: 1;
    display: flex;
    flex-direction: column;
    min-width: 0;
}

/* Sketch toolbar */
.toolbar {
    flex: none;
    display: flex;
    align-items: center;
    height: 54px;
    padding-left: 6px;
}

.tool {
    flex: none;
    width: 40px;
    height: 40px;
}

.tool svg {
    width: 28px;
    height: 28px;
}

.spaced {
    margin-left: 11px;
}

.more {
    flex: none;
    width: 38px;
    height: 40px;
}

.more svg {
    width: 16px;
    height: 10px;
}

.narrow {
    width: 34px;
}

.divider {
    flex: none;
    width: 1px;
    height: 40px;
    margin: 0 8px;
    background: #bbb;
}

.tight {
    margin: 0 8px 0 0;
}

.dxf {
    font-family: "Liberation Sans", sans-serif;
    font-size: 10px;
    font-weight: 700;
    text-anchor: middle;
}

.tool-search {
    flex: none;
    justify-content: flex-start;
    width: 204px;
    height: 48px;
    margin-left: 16px;
    padding-left: 14px;
    background: #ededed;
    white-space: nowrap;
}

kbd {
    height: 28px;
    padding: 0 6px;
    border: 1px solid #999;
    border-bottom-width: 3px;
    border-radius: 3px;
    font-family: "Noto Sans CJK SC", sans-serif;
    font-size: 15px;
    line-height: 24px;
    color: #666;
}

kbd:first-of-type {
    margin-left: 7px;
}

/* Feature panel */
.stage {
    flex: 1;
    display: flex;
    min-height: 0;
}

.panel {
    flex: none;
    width: 308px;
    border-top: 2px solid #e8e8e8;
}

.filter {
    display: flex;
    align-items: center;
    gap: 19px;
    padding: 10px 13px 0 16px;
}

.filter input {
    flex: 1;
    min-width: 0;
    height: 44px;
    padding: 0 8px;
    border: 1px solid #aaa;
    border-radius: 4px;
    font: inherit;
    font-style: italic;
}

.filter input::placeholder {
    color: #777;
}

.panel h2 {
    font-size: 20px;
    font-weight: 500;
}

.panel-head {
    display: flex;
    align-items: center;
    gap: 21px;
    height: 40px;
    padding: 7px 31px 0 6px;
}

.panel-head h2 {
    margin-right: auto;
}

.features {
    display: grid;
    grid-template-columns: 277px 31px;
    height: 547px;
    border-bottom: 2px solid #e4e4e4;
}

.features ul {
    display: flex;
    flex-direction: column;
    gap: 3px;
    list-style: none;
}

.features li {
    position: relative;
    display: flex;
    align-items: center;
    gap: 6px;
    height: 36px;
    padding-left: 9px;
}

.features li svg {
    width: 24px;
    height: 24px;
}

.features li .badge {
    position: absolute;
    left: 20px;
    top: 17px;
    width: 18px;
    height: 18px;
}

.features .selected {
    background: #b1dcf8;
    font-weight: 500;
}

.hidden-item {
    color: #999;
}

.hidden-item svg {
    opacity: 0.6;
}

.rolled {
    font-style: italic;
}

.scrollbar {
    display: flex;
    flex-direction: column;
    align-items: center;
    grid-row: span 2;
    width: 22px;
    padding: 12px 0 4px;
}

.arrow-up,
.arrow-down {
    border: 7px solid transparent;
    border-top-width: 0;
    border-bottom: 11px solid #888;
}

.arrow-down {
    border-bottom-width: 0;
    border-top: 11px solid #888;
}

.thumb {
    width: 13px;
    height: 336px;
    margin: auto 0 10px;
    border-radius: 6px;
    background: #888;
}

.rollback {
    width: 262px;
    height: 10px;
    margin: 4px 0 0 8px;
    background: #b4b4b4;
}

.parts h2 {
    display: flex;
    align-items: center;
    gap: 10px;
    height: 39px;
    padding-left: 6px;
    font-weight: 400;
}

.part {
    display: flex;
    align-items: center;
    gap: 6px;
    height: 39px;
    padding-left: 37px;
}

/* Drawing area */
.canvas {
    position: relative;
    flex: 1;
    min-width: 0;
    overflow: hidden;
}

.model {
    display: block;
    width: 100%;
    height: 100%;
}

.dim {
    font-size: 22px;
    font-weight: 700;
}

.dialog {
    position: absolute;
    left: 0;
    top: 5px;
    width: 331px;
    background: #fff;
    box-shadow: 2px 4px 14px rgba(0, 0, 0, 0.4);
}

.dialog-head {
    display: flex;
    padding-left: 10px;
}

.dialog h3 {
    flex: 1;
    font-size: 20px;
    font-weight: 500;
    line-height: 42px;
}

.accept,
.cancel {
    width: 42px;
    height: 42px;
}

.accept {
    background: #079407;
}

.plane-row {
    display: flex;
    align-items: flex-start;
    gap: 8px;
    padding: 8px 6px 0;
}

.plane-box {
    width: 281px;
    height: 66px;
    padding: 4px 14px 0 7px;
    border: 2px solid #e8e8e8;
}

.plane-label {
    display: block;
    font-size: 15px;
    line-height: 26px;
    color: #777;
}

.plane-value {
    display: flex;
    justify-content: space-between;
    color: #444;
}

.clock {
    margin-top: 5px;
}

.options {
    display: flex;
    justify-content: space-between;
    padding: 7px 0 0 7px;
}

.checks label {
    display: flex;
    align-items: center;
    gap: 6px;
    height: 41px;
    color: #555;
}

.checks input {
    appearance: none;
    position: relative;
    width: 18px;
    height: 18px;
    border-radius: 4px;
    background: #1450b0;
}

.checks input:checked::after {
    content: "";
    position: absolute;
    left: 6px;
    top: 2px;
    width: 6px;
    height: 11px;
    border: solid #fff;
    border-width: 0 3px 3px 0;
    transform: rotate(45deg);
}

.blank {
    width: 147px;
    height: 161px;
    margin-top: 4px;
    background: #f8f8f8;
}

.dialog-foot {
    display: flex;
    align-items: center;
    justify-content: flex-end;
    gap: 6px;
    padding: 3px 8px 5px;
}

.box-btn {
    width: 32px;
    height: 33px;
    border: 1px solid #bbb;
    border-radius: 5px;
}

.final {
    width: 73px;
    font-size: 18px;
}

.hint {
    margin: 6px 0 0 8px;
}

.list-toggle {
    position: absolute;
    left: 0;
    top: 456px;
    width: 49px;
    height: 51px;
    background: #fff;
    border: 1px solid #bbb;
    border-left: none;
}

.view-cube {
    position: absolute;
    top: 5px;
    right: 20px;
}

.axis {
    font-size: 18px;
    font-weight: 700;
    text-anchor: middle;
}

.axis-x {
    fill: #d9454f;
}

.axis-y {
    fill: #3ba648;
}

.face {
    font-size: 18px;
    text-anchor: middle;
}

.palette {
    position: absolute;
    top: 357px;
    right: 0;
    width: 47px;
    border: 1px solid #aaa;
    border-width: 1px 0 0 1px;
    background: #fff;
}

.palette button {
    width: 46px;
    height: 49px;
    border-bottom: 1px solid #aaa;
}

.palette svg {
    width: 30px;
    height: 30px;
}

.measure {
    position: absolute;
    right: 19px;
    bottom: 8px;
    display: flex;
    align-items: center;
    gap: 25px;
}

/* Document tabs */
.tabs {
    flex: none;
    display: flex;
    height: 44px;
    background: #e8e8e8;
    border-bottom: 4px solid #bdbdbd;
}

.add {
    flex: none;
    width: 60px;
    padding-right: 9px;
    background: #d4d4d4;
}

.tab {
    flex: none;
    display: flex;
    align-items: center;
    gap: 6px;
    padding: 0 15px 0 17px;
    border-right: 2px solid #d2d2d2;
    color: #666;
    text-decoration: none;
    white-space: nowrap;
}

.tab svg {
    width: 26px;
    height: 28px;
}

.active {
    color: #333;
    background: #fff;
    box-shadow: inset 0 -3px #1f4da8;
}

.last {
    flex: 1 1 0;
    min-width: 0;
    padding-right: 0;
    overflow: hidden;
}

.tab-nav {
    flex: none;
    display: flex;
    justify-content: space-around;
    width: 72px;
    background: #d8d8d8;
}
```
